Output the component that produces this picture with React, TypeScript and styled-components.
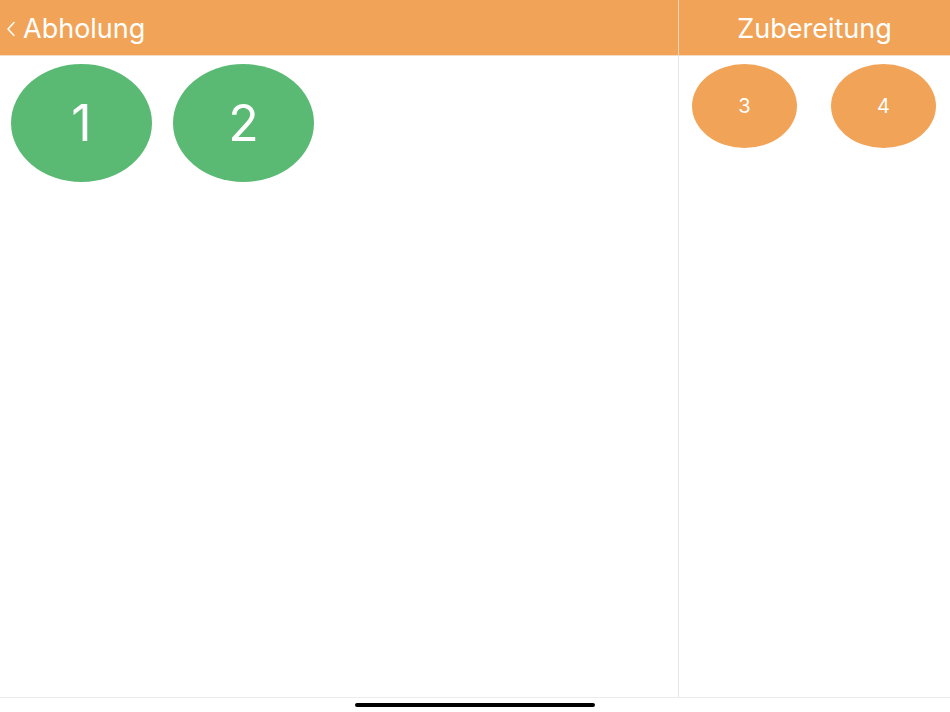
import React from "react";
import styled, { createGlobalStyle } from "styled-components";

const Global = createGlobalStyle`
  html, body { margin: 0; padding: 0; background: #fff; }
  *, *::before, *::after { box-sizing: border-box; }
  body { font-family: Inter, "Noto Sans", "Liberation Sans", sans-serif; }
`;

const Screen = styled.div`
  width: 950px;
  height: 712px;
  display: flex;
  flex-direction: column;
  background: #fff;
  overflow: hidden;
`;

const Columns = styled.div`
  flex: 1;
  display: flex;
  min-height: 0;
`;

const Panel = styled.section<{ $width?: number }>`
  display: flex;
  flex-direction: column;
  ${(p) => (p.$width ? `width: ${p.$width}px; flex: none;` : "flex: 1;")}
`;

const Header = styled.header<{ $divider?: boolean; $center?: boolean }>`
  height: 56px;
  flex: none;
  background: #f1a458;
  display: flex;
  align-items: center;
  justify-content: ${(p) => (p.$center ? "center" : "flex-start")};
  gap: 7px;
  padding: 2px 0 0 ${(p) => (p.$center ? 0 : 6)}px;
  border-right: ${(p) => (p.$divider ? "1px solid rgba(255,255,255,0.55)" : "none")};
  border-bottom: 1px solid #f3dcc4;
  color: #fff;
  font-size: 27px;
  font-weight: 400;
`;

const Title = styled.span`
  line-height: 1;
`;

const Content = styled.div<{ $divider?: boolean; $pad: number; $gap: number }>`
  flex: 1;
  display: flex;
  align-items: flex-start;
  gap: ${(p) => p.$gap}px;
  padding: 8px 0 0 ${(p) => p.$pad}px;
  border-right: ${(p) => (p.$divider ? "1px solid #e6e6e6" : "none")};
`;

const Bubble = styled.div<{ $color: string; $w: number; $h: number; $size: number }>`
  width: ${(p) => p.$w}px;
  height: ${(p) => p.$h}px;
  border-radius: 50%;
  background: ${(p) => p.$color};
  color: #fff;
  display: flex;
  align-items: center;
  justify-content: center;
  font-size: ${(p) => p.$size}px;
  font-weight: 400;
  flex: none;
`;

const Footer = styled.footer`
  height: 15px;
  flex: none;
  border-top: 1px solid #ececec;
  display: flex;
  justify-content: center;
  padding-top: 5px;
`;

const HomeIndicator = styled.div`
  width: 240px;
  height: 4px;
  border-radius: 2px;
  background: #000;
`;

const Chevron = () => (
  <svg width="10" height="16" viewBox="0 0 10 16" fill="none">
    <path d="M8 1.5 L2 8 L8 14.5" stroke="#fff" strokeWidth="1.5" strokeLinecap="round" strokeLinejoin="round" />
  </svg>
);

export default function App() {
  return (
    <Screen>
      <Global />
      <Columns>
        <Panel $width={679}>
          <Header $divider>
            <Chevron />
            <Title>Abholung</Title>
          </Header>
          <Content $divider $pad={11} $gap={21}>
            <Bubble $color="#5aba73" $w={141} $h={118} $size={50}>1</Bubble>
            <Bubble $color="#5aba73" $w={141} $h={118} $size={50}>2</Bubble>
          </Content>
        </Panel>
        <Panel>
          <Header $center>
            <Title>Zubereitung</Title>
          </Header>
          <Content $pad={13} $gap={34}>
            <Bubble $color="#f1a458" $w={105} $h={84} $size={20}>3</Bubble>
            <Bubble $color="#f1a458" $w={105} $h={84} $size={20}>4</Bubble>
          </Content>
        </Panel>
      </Columns>
      <Footer>
        <HomeIndicator />
      </Footer>
    </Screen>
  );
}
